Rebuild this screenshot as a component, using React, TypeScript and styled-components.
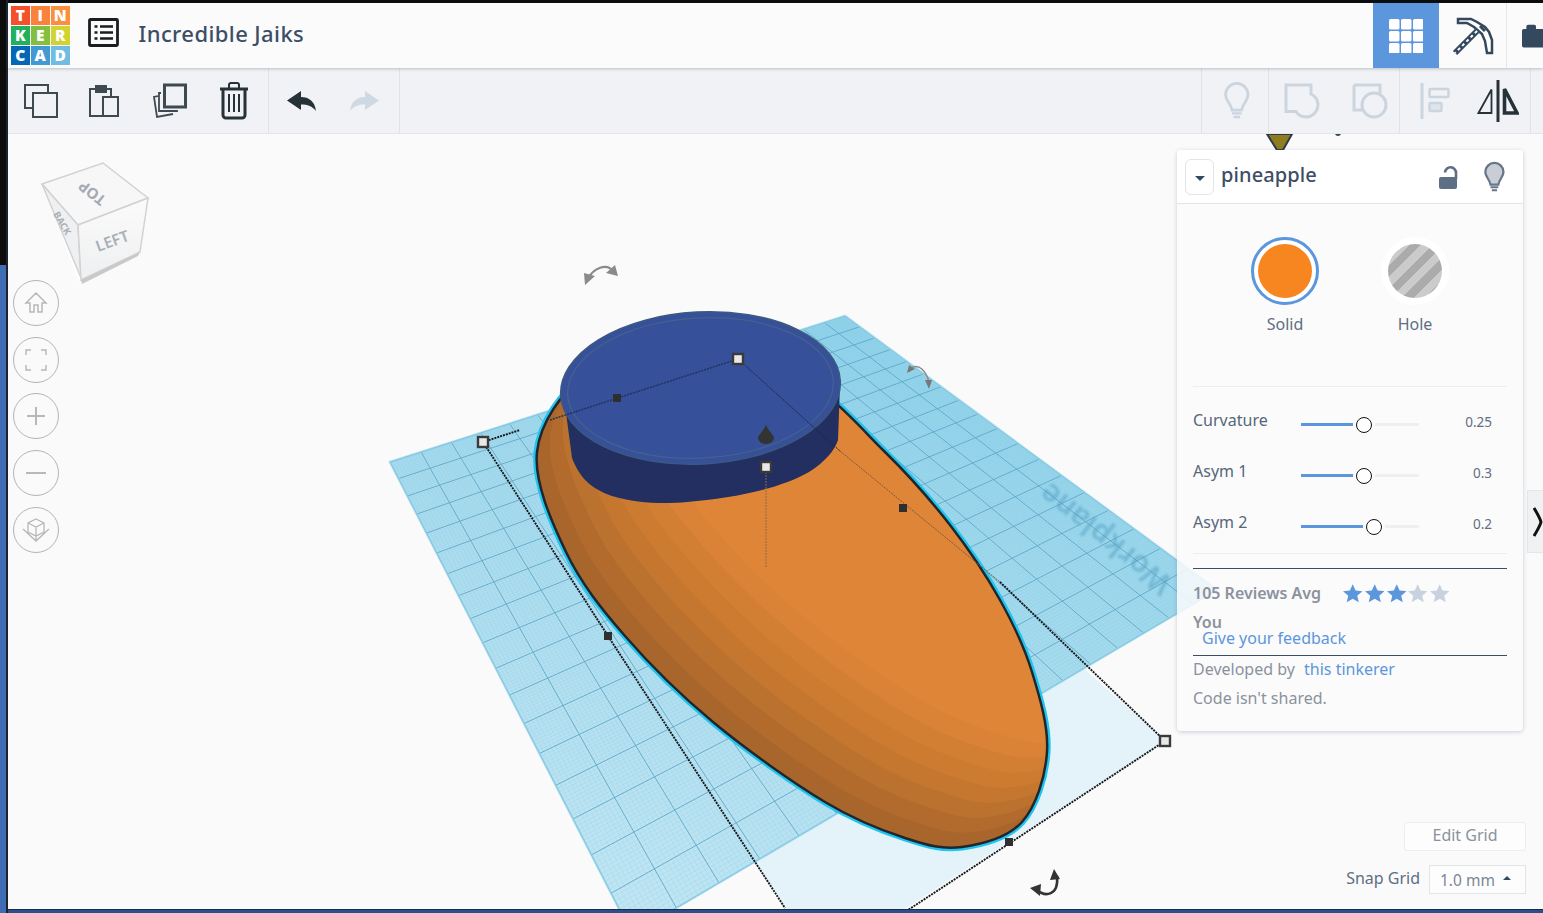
import React from "react";
import styled, { createGlobalStyle } from "styled-components";

const FONT = `"Noto Sans", "Liberation Sans", sans-serif`;

const Global = createGlobalStyle`
  html, body { margin: 0; padding: 0; height: 100%; overflow: hidden; background: #fafafa; }
  #root { height: 100%; }
`;

const Page = styled.div`
  width: 1543px; height: 913px; display: flex; font-family: ${FONT}; color: #3c4e66; overflow: hidden;
`;
const Rail = styled.div`
  width: 8px; flex: none; display: flex; flex-direction: column;
  background: linear-gradient(to bottom, #0c0c0c 0, #0c0c0c 265px, #3f6db4 265px, #3f6db4 100%);
  border-right: 2px solid #1c2230; box-sizing: border-box;
`;
const Main = styled.div`
  flex: 1; min-width: 0; display: flex; flex-direction: column;
`;
const TopStrip = styled.div`height: 3px; flex: none; background: #0c0c0c;`;
const BottomStrip = styled.div`height: 4px; flex: none; background: #2c4f8c; border-top: 1px solid #1d2c4c; box-sizing: border-box;`;

const Header = styled.header`
  height: 65px; flex: none; display: flex; align-items: center; background: #fbfbfb;
  box-shadow: 0 1px 3px rgba(60, 78, 102, .3); position: relative; z-index: 2;
`;
const Logo = styled.div`
  margin-left: 3px; display: grid; grid-template-columns: repeat(3, 18.5px); grid-auto-rows: 18.5px; gap: 1.5px;
`;
const Tile = styled.span<{ $c: string }>`
  background: ${p => p.$c}; color: #fff; font: 800 15.5px/18.5px "Open Sans", sans-serif; text-align: center;
`;
const MenuSlot = styled.div`margin: 0 0 6px 18px; width: 31px; height: 29px; display: flex;`;
const Title = styled.h1`
  margin: 0 0 6px 20px; font: 500 22px/28px ${FONT}; color: #3c4e66; letter-spacing: .4px;
`;
const Spacer = styled.div`flex: 1;`;
const GridButton = styled.div`
  width: 66px; height: 65px; background: #5c96dc; display: flex; align-items: center; justify-content: center;
`;
const HeaderSlot = styled.div`
  width: 68px; height: 65px; display: flex; align-items: center; justify-content: center;
  border-right: 1px solid #e4e6ea; box-sizing: border-box;
`;
const BagSlot = styled.div`
  width: 36px; height: 65px; display: flex; align-items: center; padding-left: 15px; box-sizing: border-box; overflow: hidden;
`;

const Toolbar = styled.div`
  height: 66px; flex: none; display: flex; background: #f1f2f5; border-bottom: 1px solid #e3e5e9; box-sizing: border-box;
`;
const ToolGroup = styled.div<{ $first?: boolean }>`
  display: flex; border-right: 1px solid #e0e2e7; ${p => p.$first ? "border-left: 1px solid #e0e2e7;" : ""}
`;
const ToolSlot = styled.div<{ $w?: number; $nudge?: number }>`
  width: ${p => p.$w ?? 65}px; box-sizing: border-box; display: flex; align-items: center; justify-content: center;
  padding-left: ${p => Math.max(0, (p.$nudge ?? 0) * 2)}px;
  padding-right: ${p => Math.max(0, -(p.$nudge ?? 0) * 2)}px;
`;
const ToolEnd = styled.div`width: 12px; flex: none;`;

const Canvas = styled.main`
  flex: 1; min-height: 0; position: relative; overflow: hidden; background: #fafafa;
`;
const Scene = styled.svg`position: absolute; left: 0; top: 0; display: block;`;
const Cube = styled.svg`position: absolute; left: 32px; top: 26px;`;
const ViewButtons = styled.div`
  position: absolute; left: 5px; top: 146px; display: flex; flex-direction: column; gap: 10.7px;
`;
const ViewButton = styled.div`
  width: 46px; height: 46px; box-sizing: border-box; border-radius: 50%; border: 1px solid #b4b4b4;
  background: #fafafa; display: flex; align-items: center; justify-content: center;
`;

const Panel = styled.aside`
  position: absolute; right: 20px; top: 16px; width: 346px; height: 581px; box-sizing: border-box;
  border-radius: 4px; background: rgba(250, 250, 251, .86);
  box-shadow: 0 1px 4px rgba(80, 100, 130, .3);
`;
const PanelHead = styled.div`
  height: 54px; box-sizing: border-box; background: #fff; border-bottom: 1px solid #e3e5ea; border-radius: 4px 4px 0 0;
  display: flex; align-items: center; padding: 0 18px 0 8px;
`;
const Drop = styled.div`
  width: 29px; height: 36px; box-sizing: border-box; border: 1px solid #e2e4ec; border-radius: 6px;
  display: flex; align-items: center; justify-content: center; margin-right: 7px;
`;
const Caret = styled.span`
  width: 0; height: 0; border-left: 5px solid transparent; border-right: 5px solid transparent; border-top: 5px solid #34495e; margin-top: 4px;
`;
const Name = styled.div`font: 500 20px/26px ${FONT}; color: #3c4e66; flex: 1; letter-spacing: .1px; padding-bottom: 4px;`;
const HeadIcons = styled.div`display: flex; align-items: center; gap: 26px;`;
const Materials = styled.div`display: flex; justify-content: center; gap: 62px; padding-top: 33px;`;
const Material = styled.div`display: flex; flex-direction: column; align-items: center; gap: 9px;`;
const Swatch = styled.div<{ $on?: boolean }>`
  width: 68px; height: 68px; box-sizing: border-box; border-radius: 50%; background: #fff;
  border: 3px solid ${p => p.$on ? "#5c96dc" : "#fff"}; display: flex; align-items: center; justify-content: center;
`;
const SwatchFill = styled.div<{ $hole?: boolean }>`
  width: 54px; height: 54px; border-radius: 50%;
  background: ${p => p.$hole
    ? "repeating-linear-gradient(135deg, #ababab 0 8px, #cbcbcb 8px 16px)"
    : "#f78620"};
`;
const MatLabel = styled.div`font: 400 16px/20px ${FONT}; color: #5f6e80;`;
const Rule = styled.div<{ $dark?: boolean; $mt: number }>`
  height: 1px; margin: ${p => p.$mt}px 16px 0; background: ${p => p.$dark ? "#3c4e66" : "#eceef1"};
`;
const Sliders = styled.div`padding-top: 9px;`;
const SliderRow = styled.div`height: 51px; display: flex; align-items: center; padding: 0 31px 0 16px;`;
const SliderLabel = styled.div`width: 108px; font: 400 16px/20px ${FONT}; color: #566679; margin-top: -3px;`;
const Track = styled.div`width: 118px; height: 3px; position: relative; background: #eeeff1; margin-top: 5px;`;
const TrackFill = styled.div`position: absolute; left: 0; top: 0; height: 100%; background: #5c96dc;`;
const Thumb = styled.div`
  position: absolute; top: 50%; width: 16px; height: 16px; box-sizing: border-box; margin: -7px 0 0 -8px;
  border-radius: 50%; background: #fff; border: 1.5px solid #111; box-shadow: 0 0 0 3px #fafafb;
`;
const SliderValue = styled.div`flex: 1; text-align: right; font: 400 13.5px/18px ${FONT}; color: #5f6e80;`;
const Reviews = styled.div`display: flex; align-items: center; height: 24px; margin: 12px 16px 0; gap: 22px;`;
const Strong = styled.div`font: 600 16px/20px ${FONT}; color: #8b929c;`;
const Stars = styled.div`display: flex; gap: 2.2px;`;
const You = styled(Strong)`margin: 9px 16px 0; line-height: 16px;`;
const FeedbackLink = styled.a`display: block; margin: -1px 25px 0; font: 400 16px/18px ${FONT}; color: #5c96dc;`;
const Muted = styled.div<{ $mt: number }>`margin: ${p => p.$mt}px 16px 0; font: 400 16px/20px ${FONT}; color: #8b929c;`;
const Inline = styled.span`color: #5c96dc; margin-left: 5px;`;

const GridControls = styled.div`
  position: absolute; right: 17px; bottom: 15px; display: flex; flex-direction: column; align-items: flex-end; gap: 14px;
`;
const EditGrid = styled.div`
  width: 122px; height: 29px; box-sizing: border-box; border: 1px solid #eceef1; border-radius: 3px; background: #fdfdfd;
  display: flex; align-items: center; justify-content: center; padding-bottom: 3px; font: 400 16px/20px ${FONT}; color: #8b929c;
`;
const SnapRow = styled.div`display: flex; align-items: center; gap: 9px;`;
const SnapLabel = styled.div`font: 400 16px/20px ${FONT}; color: #5f6e80; margin-top: -4px;`;
const SnapSelect = styled.div`
  width: 97px; height: 29px; box-sizing: border-box; border: 1px solid #e2e4e8; background: #fdfdfd;
  display: flex; align-items: center; padding: 0 10px; gap: 8px; font: 400 15.5px/20px ${FONT}; color: #7b8794;
`;
const CaretUp = styled.span`
  width: 0; height: 0; border-left: 4px solid transparent; border-right: 4px solid transparent; border-bottom: 4px solid #34495e; margin-bottom: 3px;
`;
const SideTab = styled.div`
  position: absolute; right: 0; top: 356px; width: 16px; height: 63px; box-sizing: border-box; background: #f0f1f3;
  border: 1px solid #e4e6ea; border-right: 0; display: flex; align-items: center; justify-content: flex-start; padding-left: 5px;
`;

/* ---------- geometry helpers ---------- */
type P = [number, number];
function homography(q: P[]) {
  const [[x0, y0], [x1, y1], [x2, y2], [x3, y3]] = q;
  const sx = x0 - x1 + x2 - x3, sy = y0 - y1 + y2 - y3;
  const dx1 = x1 - x2, dx2 = x3 - x2, dy1 = y1 - y2, dy2 = y3 - y2;
  const den = dx1 * dy2 - dx2 * dy1;
  const g = (sx * dy2 - dx2 * sy) / den, h = (dx1 * sy - sx * dy1) / den;
  const a = x1 - x0 + g * x1, b = x3 - x0 + h * x3, d = y1 - y0 + g * y1, e = y3 - y0 + h * y3;
  return (u: number, v: number): P => {
    const w = g * u + h * v + 1;
    return [(a * u + b * v + x0) / w, (d * u + e * v + y0) / w];
  };
}
function gridPath(q: P[], n: number, skip = 0) {
  const H = homography(q);
  let s = "";
  for (let i = 0; i <= n; i++) {
    if (skip && i % skip === 0) continue;
    const t = i / n;
    const a = H(t, 0), b = H(t, 1), c = H(0, t), d = H(1, t);
    s += `M${a[0].toFixed(1)} ${a[1].toFixed(1)}L${b[0].toFixed(1)} ${b[1].toFixed(1)}`;
    s += `M${c[0].toFixed(1)} ${c[1].toFixed(1)}L${d[0].toFixed(1)} ${d[1].toFixed(1)}`;
  }
  return s;
}
function smooth(pts: P[]) {
  const n = pts.length;
  let s = `M${pts[0][0]} ${pts[0][1]}`;
  for (let i = 0; i < n; i++) {
    const p0 = pts[(i - 1 + n) % n], p1 = pts[i], p2 = pts[(i + 1) % n], p3 = pts[(i + 2) % n];
    const c1: P = [p1[0] + (p2[0] - p0[0]) / 6, p1[1] + (p2[1] - p0[1]) / 6];
    const c2: P = [p2[0] - (p3[0] - p1[0]) / 6, p2[1] - (p3[1] - p1[1]) / 6];
    s += `C${c1[0].toFixed(1)} ${c1[1].toFixed(1)} ${c2[0].toFixed(1)} ${c2[1].toFixed(1)} ${p2[0]} ${p2[1]}`;
  }
  return s + "Z";
}

const PLANE: P[] = [[390, 462], [845, 316], [1217, 590], [632, 934]];
const MAJOR = gridPath(PLANE, 18);
const MINOR = gridPath(PLANE, 180, 10);
const EGG: P[] = [
  [537, 452], [566, 552], [625, 636], [713, 722], [825, 802], [905, 838], [962, 847], [1022, 822], [1047, 752],
  [1032, 672], [1000, 600], [950, 525], [885, 452], [800, 378], [680, 345], [585, 375],
];
const EGG_D = smooth(EGG);
const BANDS = ["#a8652c", "#b26b2d", "#bc722f", "#c57730", "#cc7b31", "#d37f33", "#da8235", "#df8537"];

const Handle = ({ x, y, open }: { x: number; y: number; open?: boolean }) => open
  ? <rect x={x - 5} y={y - 5} width={10} height={10} fill="#e8e8e8" stroke="#3a3a3a" strokeWidth={2.4} />
  : <rect x={x - 4} y={y - 4} width={8} height={8} fill="#2f2f2f" />;

const Star = ({ on }: { on?: boolean }) => (
  <svg width="19.5" height="19" viewBox="0 0 20 19">
    <path d="M10 0l2.9 6.4 7 .7-5.3 4.6 1.6 6.9L10 15l-6.2 3.6 1.6-6.9L0 7.1l7-.7z" fill={on ? "#5c96dc" : "#c8d2de"} />
  </svg>
);

const D = "#3f4a50";
const Bulb = ({ c, fill, size = 30 }: { c: string; fill: string; size?: number }) => (
  <svg width={size * .8} height={size * 1.22} viewBox="0 0 24 36">
    <path d="M12 2a10.5 10.5 0 0 0-10.5 10.5c0 5.6 5 8 6 14.5h9c1-6.500 6-8.900 6-14.500A10.500 10.500 0 0 0 12 2z" fill={fill} stroke={c} strokeWidth="2.6" />
    <path d="M7.500 30h9M9 33.500h6" stroke={c} strokeWidth="2.2" />
  </svg>
);

export default function App() {
  const tiles: [string, string][] = [["T", "#f4502b"], ["I", "#f9823c"], ["N", "#fa8f3d"], ["K", "#21b05b"], ["E", "#84c040"], ["R", "#d2d232"], ["C", "#0468b6"], ["A", "#4399d2"], ["D", "#70bde3"]];
  const sliders = [
    { label: "Curvature", value: "0.25", pos: 63, fill: 52 },
    { label: "Asym 1", value: "0.3", pos: 63, fill: 52 },
    { label: "Asym 2", value: "0.2", pos: 73, fill: 62 },
  ];
  return (
    <Page>
      <Global />
      <Rail />
      <Main>
        <TopStrip />
        <Header>
          <Logo>{tiles.map(([l, c]) => <Tile key={l} $c={c}>{l}</Tile>)}</Logo>
          <MenuSlot>
            <svg width="31" height="29" viewBox="0 0 31 29">
              <rect x="1.500" y="1.500" width="28" height="26" rx="1" fill="none" stroke="#1a1e22" strokeWidth="2.800" />
              <path d="M6.500 8.500h3M6.500 14.500h3M6.500 20.500h3M12 8.500h13M12 14.500h13M12 20.500h13" stroke="#1a1e22" strokeWidth="2.600" />
            </svg>
          </MenuSlot>
          <Title>Incredible Jaiks</Title>
          <Spacer />
          <GridButton>
            <svg width="34" height="34" viewBox="0 0 34 34">
              {[0, 12, 24].flatMap(y => [0, 12, 24].map(x => <rect key={`${x}-${y}`} x={x} y={y} width="10.500" height="10.500" rx="1.500" fill="#fff" />))}
            </svg>
          </GridButton>
          <HeaderSlot>
            <svg width="42" height="40" viewBox="0 0 42 40">
              <path d="M6 3h13l6 3 8 5 4 5 3 8v13h-5l-2-12-3-7-8-7-7-4H6z" fill="#fff" stroke="#34495e" strokeWidth="2.500" />
              <path d="M28 10l5 5" stroke="#34495e" strokeWidth="3" />
              <path d="M25 15L3 37" stroke="#34495e" strokeWidth="6" />
              <path d="M25 15L3 37" stroke="#fff" strokeWidth="2" strokeDasharray="3 3" />
            </svg>
          </HeaderSlot>
          <BagSlot>
            <svg width="24" height="26" viewBox="0 0 24 26">
              <path d="M0 7a2 2 0 0 1 2-2h3V2a2 2 0 0 1 2-2h7a2 2 0 0 1 2 2v3h8v21H2a2 2 0 0 1-2-2z" fill="#34495e" />
            </svg>
          </BagSlot>
        </Header>
        <Toolbar>
          <ToolGroup>
            <ToolSlot>
              <svg width="34" height="34" viewBox="0 0 34 34" fill="none" stroke={D} strokeWidth="2"><path d="M9 24H1V1h23v8" /><rect x="9" y="9" width="24" height="24" /></svg>
            </ToolSlot>
            <ToolSlot $nudge={-2}>
              <svg width="30" height="34" viewBox="0 0 30 34" fill="none" stroke={D} strokeWidth="2">
                <path d="M14 32H1V5h6M17 5h5v8" /><rect x="7" y="2" width="10" height="6" fill={D} /><rect x="14" y="13" width="15" height="19" />
              </svg>
            </ToolSlot>
            <ToolSlot $nudge={-1}>
              <svg width="36" height="36" viewBox="0 0 36 36" fill="none" stroke={D}>
                <rect x="12.500" y="2" width="21" height="22" strokeWidth="3" />
                <path d="M9 10H7v18h18v-1M6 13l-4 1 3 20 16-3" strokeWidth="1.800" />
              </svg>
            </ToolSlot>
            <ToolSlot $nudge={-2}>
              <svg width="30" height="38" viewBox="0 0 30 38" fill="none" stroke="#263238" strokeWidth="2.500">
                <path d="M1 7h28" strokeWidth="3" /><path d="M10 6V3a2 2 0 0 1 2-2h6a2 2 0 0 1 2 2v3" strokeWidth="2" />
                <path d="M4 7v26a3 3 0 0 0 3 3h16a3 3 0 0 0 3-3V7" strokeWidth="3" /><path d="M10 12v18M15 12v18M20 12v18" strokeWidth="2" />
              </svg>
            </ToolSlot>
          </ToolGroup>
          <ToolGroup>
            <ToolSlot>
              <svg width="29" height="20" viewBox="0 0 29 20"><path d="M0 9.500 14 0v6c8 0 14 4.500 15 14-4-5-8-6.500-15-6.500V19z" fill="#263238" /></svg>
            </ToolSlot>
            <ToolSlot $nudge={-2}>
              <svg width="29" height="20" viewBox="0 0 29 20"><path d="M29 9.500 15 0v6C7 6 1 10.500 0 20c4-5 8-6.500 15-6.500V19z" fill="#cfd9e3" /></svg>
            </ToolSlot>
          </ToolGroup>
          <Spacer />
          <ToolGroup $first>
            <ToolSlot $w={66} $nudge={2}><Bulb c="#cbd5df" fill="none" size={32} /></ToolSlot>
          </ToolGroup>
          <ToolGroup>
            <ToolSlot>
              <svg width="36" height="36" viewBox="0 0 36 36" fill="none" stroke="#cbd5df" strokeWidth="3"><path d="M2 2H27V11A12 12 0 1 1 12 28.600H2Z" /></svg>
            </ToolSlot>
            <ToolSlot $nudge={3}>
              <svg width="36" height="36" viewBox="0 0 36 36" fill="none" stroke="#cbd5df" strokeWidth="3"><path d="M2 2h26v8M10 27H2V2" /><circle cx="22" cy="22" r="12" /></svg>
            </ToolSlot>
          </ToolGroup>
          <ToolGroup>
            <ToolSlot $nudge={2}>
              <svg width="30" height="36" viewBox="0 0 30 36" fill="none" stroke="#cbd5df" strokeWidth="2.500"><path d="M2 0v36" strokeWidth="3" /><rect x="9.500" y="6" width="19" height="8" rx="1" /><rect x="9.500" y="20" width="12" height="8" rx="1" fill="#dfe5ec" /></svg>
            </ToolSlot>
            <ToolSlot $w={65}>
              <svg width="42" height="42" viewBox="0 0 42 42"><path d="M21 0v42" stroke="#263238" strokeWidth="3" /><path d="M14.500 9.500V33H1.500z" fill="none" stroke="#263238" strokeWidth="1.800" /><path d="M27.500 9V33H40z" fill="none" stroke="#263238" strokeWidth="3.600" /></svg>
            </ToolSlot>
          </ToolGroup>
          <ToolEnd />
        </Toolbar>
        <Canvas>
          <Scene width="1535" height="775" viewBox="8 134 1535 775">
            <defs>
              <linearGradient id="plane" gradientUnits="userSpaceOnUse" x1="845" y1="316" x2="630" y2="931">
                <stop offset="0" stopColor="#90d3ea" />
                <stop offset=".45" stopColor="#aadcee" />
                <stop offset="1" stopColor="#c2e6f3" />
              </linearGradient>
              <clipPath id="egg"><path d={EGG_D} /></clipPath>
              <filter id="soft"><feGaussianBlur stdDeviation=".8" /></filter>
            </defs>
            <path d="M1267 134H1292L1283 150H1277Z" fill="#8f7c1e" stroke="#2d3a4a" strokeWidth="2" />
            <circle cx="1338" cy="133" r="3" fill="#34495e" />
            <polygon points="483,442 738,359 1165,741 821,963" fill="#e3f3f9" />
            <polygon points={PLANE.join(" ")} fill="url(#plane)" />
            <path d={MINOR} stroke="#86cbe3" strokeWidth=".45" opacity=".5" fill="none" />
            <path d={MAJOR} stroke="#5aa5c7" strokeWidth="1" opacity=".85" fill="none" />
            <polygon points={PLANE.join(" ")} fill="none" stroke="#8fd2ea" strokeWidth="2.500" opacity=".6" />
            <text x="0" y="0" transform="translate(1174 580) rotate(218.500)" fontFamily={FONT} fontSize="30" fontWeight="600" fill="#4f9cc0" opacity=".5" filter="url(#soft)">Workplane</text>

            <path d={EGG_D} fill="none" stroke="#1fc4ef" strokeWidth="7" />
            <g clipPath="url(#egg)">
              {BANDS.map((c, i) => (
                <path key={c} d={EGG_D} fill={c} transform={`translate(${i * 13} ${i * -15})`} />
              ))}
            </g>
            <path d={EGG_D} fill="none" stroke="#20262b" strokeWidth="2.500" />

            <path d="M563 390 572 458c8 20 18 30 40 38 25 8 55 8 75 6 45-4 90-12 122-30 16-10 26-22 29-32l2-55z" fill="#222f60" />
            <ellipse cx="700.500" cy="388" rx="140" ry="76" transform="rotate(-3 700.500 388)" fill="#37509a" stroke="#3c5a80" strokeWidth="1.500" />
            <ellipse cx="700.500" cy="388" rx="133" ry="70" transform="rotate(-3 700.500 388)" fill="none" stroke="#44628c" strokeWidth="1.300" />

            <g fill="none" stroke="#15171b" strokeWidth="1.900" strokeDasharray="2 1">
              <path d="M483 442 520 430" />
              <path d="M483 442 608 636 785 908" />
              <path d="M1000 582 1165 741 905 912" />
              <path d="M550 420 738 359" stroke="#23335f" strokeWidth="1.500" />
              <path d="M738 359 840 451" stroke="#1b2750" strokeWidth="1" />
              <path d="M840 451 1000 582" stroke="#7f5a3a" strokeWidth="1" />
              <path d="M766 472V568" stroke="#8f6a45" strokeWidth="1" />
            </g>
            <Handle x={483} y={442} open />
            <Handle x={738} y={359} open />
            <Handle x={1165} y={741} open />
            <Handle x={766} y={467} open />
            <Handle x={617} y={398} />
            <Handle x={903} y={508} />
            <Handle x={608} y={636} />
            <Handle x={1009} y={842} />
            <path d="M766 425c3 7 8 10 8 13a8 6 0 0 1-16 0c0-3 5-6 8-13z" fill="#333" />

            <path d="M587 280c6-12 20-18 27-8" fill="none" stroke="#8a8a8a" strokeWidth="2.200" />
            <path d="M585 285 584 273 595 276zM618 276 606 273 615 265z" fill="#8a8a8a" />
            <path d="M911 368c8-5 15 3 18 14" fill="none" stroke="#8a8a8a" strokeWidth="1.500" />
            <path d="M907 373 909 365 915 369zM929 389 925 380 932 380z" fill="#777" />
            <path d="M1037 890c8 7 22 6 20-14" fill="none" stroke="#333" strokeWidth="2.600" />
            <path d="M1050 880 1054 869 1060 879zM1030 888 1041 884 1040 896z" fill="#333" />
          </Scene>

          <Cube width="112" height="128" viewBox="40 160 112 128">
            <defs>
              <linearGradient id="cubeFace" x1="0" y1="0" x2="0" y2="1">
                <stop offset="0" stopColor="#fbfbfb" />
                <stop offset="1" stopColor="#eeeff0" />
              </linearGradient>
            </defs>
            <path d="M42 184 79 281 138 253 148 198 103 163z" fill="#fff" />
            <path d="M42 184 103 163 148 198 78 225z" fill="#f7f7f8" stroke="#d2d2d2" strokeWidth="1.500" />
            <path d="M42 184 78 225 81 278z" fill="#eff0f1" stroke="#d2d2d2" strokeWidth="1.500" />
            <path d="M78 225 148 198 140 252 81 280z" fill="url(#cubeFace)" stroke="#d2d2d2" strokeWidth="1.500" />
            <path d="M81 280 140 252 138 256 82 284z" fill="#c9c9c9" />
            <text transform="translate(107 198) rotate(218)" fontFamily={FONT} fontSize="15" fontWeight="700" fill="#a4abb4">TOP</text>
            <text transform="translate(98 252) rotate(-20)" fontFamily={FONT} fontSize="15.500" fontWeight="600" fill="#a8afb8">LEFT</text>
            <text transform="translate(53 214) rotate(60)" fontFamily={FONT} fontSize="9.500" fontWeight="700" fill="#a8afb8">BACK</text>
          </Cube>

          <ViewButtons>
            <ViewButton>
              <svg width="24" height="24" viewBox="0 0 24 24" fill="none" stroke="#b8b8b8" strokeWidth="1.500"><path d="M12 2 2 12h4v9h4v-7h4v7h4v-9h4z" /></svg>
            </ViewButton>
            <ViewButton>
              <svg width="22" height="22" viewBox="0 0 22 22" fill="none" stroke="#b8b8b8" strokeWidth="1.500"><path d="M1 6V1h5M16 1h5v5M21 16v5h-5M6 21H1v-5" /></svg>
            </ViewButton>
            <ViewButton>
              <svg width="20" height="20" viewBox="0 0 20 20" fill="none" stroke="#b8b8b8" strokeWidth="2"><path d="M10 1v18M1 10h18" /></svg>
            </ViewButton>
            <ViewButton>
              <svg width="20" height="20" viewBox="0 0 20 20" fill="none" stroke="#b8b8b8" strokeWidth="2"><path d="M0 10h20" /></svg>
            </ViewButton>
            <ViewButton>
              <svg width="28" height="24" viewBox="0 0 28 24" fill="none" stroke="#b8b8b8" strokeWidth="1.300"><path d="M14 1 22 5v9l-8 4-8-4V5zM6 5l8 4 8-4M14 9v14M1 11l13 12 13-12" /></svg>
            </ViewButton>
          </ViewButtons>

          <Panel>
            <PanelHead>
              <Drop><Caret /></Drop>
              <Name>pineapple</Name>
              <HeadIcons>
                <svg width="20" height="26" viewBox="0 0 20 26" fill="none">
                  <path d="M7 8.500a5.500 5.500 0 0 1 11 .5v6" stroke="#5c6f84" strokeWidth="2.600" />
                  <rect x="1" y="13" width="18" height="12" rx="2" fill="#5c6f84" />
                </svg>
                <Bulb c="#66778a" fill="#c9ced6" size={26} />
              </HeadIcons>
            </PanelHead>
            <Materials>
              <Material>
                <Swatch $on><SwatchFill /></Swatch>
                <MatLabel>Solid</MatLabel>
              </Material>
              <Material>
                <Swatch><SwatchFill $hole /></Swatch>
                <MatLabel>Hole</MatLabel>
              </Material>
            </Materials>
            <Rule $mt={52} />
            <Sliders>
              {sliders.map(s => (
                <SliderRow key={s.label}>
                  <SliderLabel>{s.label}</SliderLabel>
                  <Track>
                    <TrackFill style={{ width: s.fill }} />
                    <Thumb style={{ left: s.pos }} />
                  </Track>
                  <SliderValue>{s.value}</SliderValue>
                </SliderRow>
              ))}
            </Sliders>
            <Rule $mt={4} />
            <Rule $dark $mt={14} />
            <Reviews>
              <Strong>105 Reviews Avg</Strong>
              <Stars><Star on /><Star on /><Star on /><Star /><Star /></Stars>
            </Reviews>
            <You>You</You>
            <FeedbackLink>Give your feedback</FeedbackLink>
            <Rule $dark $mt={8} />
            <Muted $mt={3}>Developed by <Inline>this tinkerer</Inline></Muted>
            <Muted $mt={9}>Code isn't shared.</Muted>
          </Panel>

          <SideTab>
            <svg width="10" height="30" viewBox="0 0 10 30" fill="none" stroke="#111" strokeWidth="3"><path d="M1 1c3 5 6 10 7 14-1 4-4 9-7 14" /></svg>
          </SideTab>

          <GridControls>
            <EditGrid>Edit Grid</EditGrid>
            <SnapRow>
              <SnapLabel>Snap Grid</SnapLabel>
              <SnapSelect>1.0 mm<CaretUp /></SnapSelect>
            </SnapRow>
          </GridControls>
        </Canvas>
        <BottomStrip />
      </Main>
    </Page>
  );
}
